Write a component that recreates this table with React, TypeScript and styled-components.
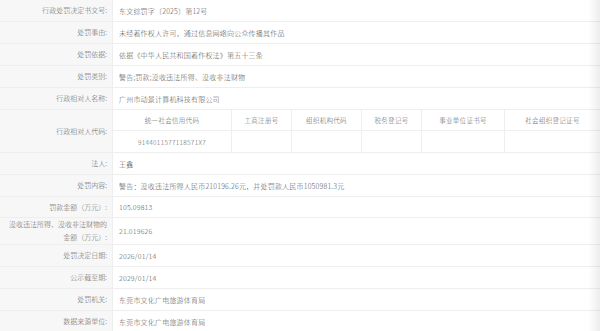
import React from 'react';
import styled, { createGlobalStyle } from 'styled-components';

const GlobalStyle = createGlobalStyle`
  html, body {
    margin: 0;
    padding: 0;
    background: #ffffff;
  }
  body {
    font-family: "Noto Sans CJK SC", "Liberation Sans", sans-serif;
  }
`;

const Page = styled.div`
  position: relative;
  width: 600px;
  height: 331px;
  overflow: hidden;
  background: #fff;
`;

const Sheet = styled.div`
  display: flex;
  flex-direction: column;
  width: 600px;
`;

const Row = styled.div<{ h: number }>`
  display: grid;
  grid-template-columns: 113px 1fr;
  height: ${({ h }) => h}px;
  border-bottom: 1px solid #eeeeee;
  box-sizing: border-box;
`;

const Label = styled.div`
  display: flex;
  align-items: center;
  justify-content: flex-end;
  text-align: right;
  padding-right: 5px;
  background: #f7f7f7;
  border-right: 1px solid #eeeeee;
  color: #666;
  font-size: 7px;
  font-weight: 300;
  line-height: 13px;
  letter-spacing: 0;
  white-space: nowrap;
`;

const Value = styled.div`
  display: flex;
  align-items: center;
  padding-left: 6px;
  color: #555;
  font-size: 7px;
  font-weight: 300;
  letter-spacing: 0.2px;
  white-space: nowrap;
`;

const CodeGrid = styled.div`
  display: grid;
  grid-template-columns: 119px 60px 70px 60px 83px 1fr;
  grid-template-rows: 1fr 1fr;
  height: 100%;
`;

const CodeCell = styled.div<{ last?: boolean; top?: boolean }>`
  display: flex;
  align-items: center;
  justify-content: center;
  color: #666;
  font-size: 6.5px;
  font-weight: 300;
  letter-spacing: 0.3px;
  border-right: ${({ last }) => (last ? 'none' : '1px solid #eeeeee')};
  border-bottom: ${({ top }) => (top ? '1px solid #eeeeee' : 'none')};
`;

const EdgeShade = styled.div`
  position: absolute;
  top: 0;
  right: 0;
  width: 12px;
  height: 100%;
  background: linear-gradient(to right, rgba(0, 0, 0, 0), rgba(0, 0, 0, 0.07));
  pointer-events: none;
`;

const rowsTop: [string, string][] = [
  ['行政处罚决定书文号:', '东文综罚字〔2025〕第12号'],
  ['处罚事由:', '未经著作权人许可，通过信息网络向公众传播其作品'],
  ['处罚依据:', '依据《中华人民共和国著作权法》第五十三条'],
  ['处罚类别:', '警告;罚款;没收违法所得、没收非法财物'],
  ['行政相对人名称:', '广州市动景计算机科技有限公司'],
];

const codeHeads = [
  '统一社会信用代码',
  '工商注册号',
  '组织机构代码',
  '税务登记号',
  '事业单位证书号',
  '社会组织登记证号',
];

export default function App() {
  return (
    <Page>
      <GlobalStyle />
      <Sheet>
        {rowsTop.map(([k, v]) => (
          <Row h={22} key={k}>
            <Label>{k}</Label>
            <Value>{v}</Value>
          </Row>
        ))}
        <Row h={43}>
          <Label>行政相对人代码:</Label>
          <CodeGrid>
            {codeHeads.map((c, i) => (
              <CodeCell key={c} top last={i === codeHeads.length - 1}>
                {c}
              </CodeCell>
            ))}
            {codeHeads.map((c, i) => (
              <CodeCell key={c + 'v'} last={i === codeHeads.length - 1}>
                {i === 0 ? '9144011577118571X7' : ''}
              </CodeCell>
            ))}
          </CodeGrid>
        </Row>
        <Row h={22}>
          <Label>法人:</Label>
          <Value>王鑫</Value>
        </Row>
        <Row h={22}>
          <Label>处罚内容:</Label>
          <Value>警告：没收违法所得人民币210196.26元，并处罚款人民币1050981.3元</Value>
        </Row>
        <Row h={21}>
          <Label>罚款金额（万元）:</Label>
          <Value>105.09813</Value>
        </Row>
        <Row h={27}>
          <Label>
            没收违法所得、没收非法财物的
            <br />
            金额（万元）:
          </Label>
          <Value>21.019626</Value>
        </Row>
        <Row h={22}>
          <Label>处罚决定日期:</Label>
          <Value>2026/01/14</Value>
        </Row>
        <Row h={22}>
          <Label>公示截至期:</Label>
          <Value>2029/01/14</Value>
        </Row>
        <Row h={22}>
          <Label>处罚机关:</Label>
          <Value>东莞市文化广电旅游体育局</Value>
        </Row>
        <Row h={22}>
          <Label>数据来源单位:</Label>
          <Value>东莞市文化广电旅游体育局</Value>
        </Row>
      </Sheet>
      <EdgeShade />
    </Page>
  );
}
